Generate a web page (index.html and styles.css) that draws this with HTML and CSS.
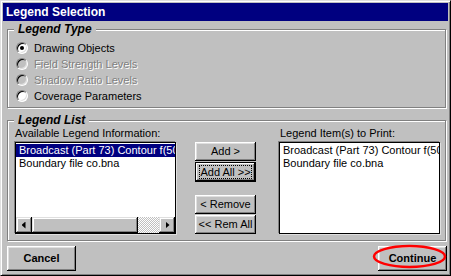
FILE: index.html
```html
<!DOCTYPE html>
<html lang="en">
<head>
	<meta charset="UTF-8">
	<title>Legend Selection</title>
	<link rel="stylesheet" href="styles.css">
</head>
<body>
	<div class="dialog">
		<div class="titlebar">Legend Selection</div>

		<fieldset class="frame frame-type">
			<legend>Legend Type</legend>
			<label class="radio"><span class="dot checked"></span>Drawing Objects</label>
			<label class="radio disabled"><span class="dot"></span>Field Strength Levels</label>
			<label class="radio disabled"><span class="dot"></span>Shadow Ratio Levels</label>
			<label class="radio"><span class="dot"></span>Coverage Parameters</label>
		</fieldset>

		<fieldset class="frame frame-list">
			<legend>Legend List</legend>
			<div class="lists">
				<div class="col">
					<div class="caption">Available Legend Information:</div>
					<div class="listbox">
						<div class="items">
							<div class="item selected">Broadcast (Part 73) Contour f(50,50)</div>
							<div class="item">Boundary file co.bna</div>
						</div>
						<div class="hscroll">
							<span class="sbtn"><span class="tri tri-left"></span></span>
							<span class="thumb"></span>
							<span class="track"></span>
							<span class="sbtn"><span class="tri tri-right"></span></span>
						</div>
					</div>
				</div>

				<div class="mover">
					<button class="btn btn-add">Add &gt;</button>
					<button class="btn btn-default"><span class="focus">Add All &gt;&gt;</span></button>
					<button class="btn btn-remove">&lt; Remove</button>
					<button class="btn">&lt;&lt; Rem All</button>
				</div>

				<div class="col col-right">
					<div class="caption">Legend Item(s) to Print:</div>
					<div class="listbox">
						<div class="items">
							<div class="item">Broadcast (Part 73) Contour f(50,50)</div>
							<div class="item">Boundary file co.bna</div>
						</div>
					</div>
				</div>
			</div>
		</fieldset>

		<div class="actions">
			<button class="btn btn-big">Cancel</button>
			<div class="marked">
				<button class="btn btn-big">Continue</button>
				<svg class="ring" width="76" height="26" viewBox="0 0 76 26">
					<ellipse cx="37.5" cy="12.5" rx="35.5" ry="10.5" fill="none" stroke="#ff0000" stroke-width="2.5"/>
				</svg>
			</div>
		</div>
	</div>
</body>
</html>
```

FILE: styles.css
```css
*{
	margin: 0;
	padding: 0;
	box-sizing: border-box;
}
body{
	background: #c0c0c0;
	color: #000;
	font-family: "Liberation Sans", Arial, sans-serif;
	font-size: 11px;
	line-height: 13px;
}
.dialog{
	display: flex;
	flex-direction: column;
	width: 451px;
	height: 276px;
	padding: 2px;
	background: #c0c0c0;
	border: 1px solid;
	border-color: #dfdfdf #000 #000 #dfdfdf;
	box-shadow: inset 1px 1px 0 #fff, inset -1px -1px 0 #808080;
}
.titlebar{
	height: 18px;
	padding: 1px 0 0 3px;
	line-height: 16px;
	background: #000080;
	color: #fff;
	font-size: 12px;
	font-weight: bold;
}

/* etched group frames */
.frame{
	min-width: 0;
	width: 439px;
	margin-left: 4px;
	border: 1px solid #808080;
	box-shadow: 1px 1px 0 #fff, inset 1px 1px 0 #fff;
}
.frame legend{
	padding: 0 4px;
	background: #c0c0c0;
	font-size: 12px;
	line-height: 13px;
	font-weight: bold;
	font-style: italic;
}
.frame-type{
	margin-top: 2px;
	padding: 4px 4px 3px 6px;
}
.frame-list{
	margin-top: 6px;
	padding: 0 4px 5px 6px;
}

/* radio rows */
.radio{
	display: flex;
	align-items: center;
	gap: 6px;
	height: 16px;
	padding-left: 2px;
}
.radio.disabled{
	color: #808080;
	text-shadow: 1px 1px 0 #fff;
}
.dot{
	display: flex;
	align-items: center;
	justify-content: center;
	width: 12px;
	height: 12px;
	border-radius: 50%;
	background: #fff;
	border: 1px solid;
	border-color: #808080 #fff #fff #808080;
	box-shadow: inset 1px 1px 0 #000, inset -1px -1px 0 #dfdfdf;
}
.disabled .dot{
	background: #c0c0c0;
}
.dot.checked::after{
	content: "";
	width: 4px;
	height: 4px;
	border-radius: 50%;
	background: #000;
}

/* list area */
.lists{
	display: flex;
}
.col{
	width: 163px;
}
.caption{
	padding-left: 1px;
	white-space: nowrap;
}
.col-right .caption{
	padding-left: 2px;
}
.listbox{
	display: flex;
	flex-direction: column;
	width: 161px;
	height: 92px;
	margin: 2px 1px 1px;
	background: #fff;
	border: 1px solid #000;
	box-shadow: -1px -1px 0 #808080, 1px 1px 0 #dfdfdf;
}
.items{
	flex: 1;
	overflow: hidden;
	padding-top: 1px;
}
.item{
	height: 13px;
	padding-left: 3px;
	white-space: nowrap;
	overflow: hidden;
}
.item.selected{
	background: #000080;
	color: #fff;
}

/* horizontal scrollbar */
.hscroll{
	display: flex;
	height: 16px;
}
.sbtn, .thumb{
	background: #c0c0c0;
	box-shadow: inset -1px -1px 0 #000, inset 1px 1px 0 #dfdfdf, inset -2px -2px 0 #808080, inset 2px 2px 0 #fff;
}
.sbtn{
	display: flex;
	align-items: center;
	justify-content: center;
	width: 16px;
}
.thumb{
	width: 106px;
}
.track{
	flex: 1;
	background: conic-gradient(#fff 25%, #c0c0c0 0 50%, #fff 0 75%, #c0c0c0 0) 0 0 / 2px 2px;
}
.tri{
	width: 4px;
	height: 7px;
	background: #000;
}
.tri-left{
	clip-path: polygon(100% 0, 0 50%, 100% 100%);
	margin-left: -1px;
}
.tri-right{
	clip-path: polygon(0 0, 100% 50%, 0 100%);
	margin-left: 1px;
}

/* buttons */
.btn{
	display: flex;
	align-items: center;
	justify-content: center;
	background: #c0c0c0;
	border: none;
	color: #000;
	font: inherit;
	box-shadow: inset -1px -1px 0 #000, inset 1px 1px 0 #fff, inset -2px -2px 0 #808080, inset 2px 2px 0 #dfdfdf;
}
.mover{
	display: flex;
	flex-direction: column;
	gap: 1px;
	margin: 15px 22px 0 18px;
}
.mover .btn{
	width: 61px;
	height: 19px;
}
.mover .btn-default{
	height: 20px;
	box-shadow: inset 0 0 0 1px #000, inset -2px -2px 0 #000, inset 2px 2px 0 #fff, inset -3px -3px 0 #808080;
}
.focus{
	display: block;
	width: 53px;
	border: 1px dotted #000;
	line-height: 12px;
}
.mover .btn-remove{
	margin-top: 12px;
}

.actions{
	display: flex;
	justify-content: space-between;
	margin: 5px 1px 0 4px;
}
.btn-big{
	width: 69px;
	height: 25px;
	font-weight: bold;
}
.marked{
	position: relative;
}
.ring{
	position: absolute;
	left: -6px;
	top: -2px;
}
```
